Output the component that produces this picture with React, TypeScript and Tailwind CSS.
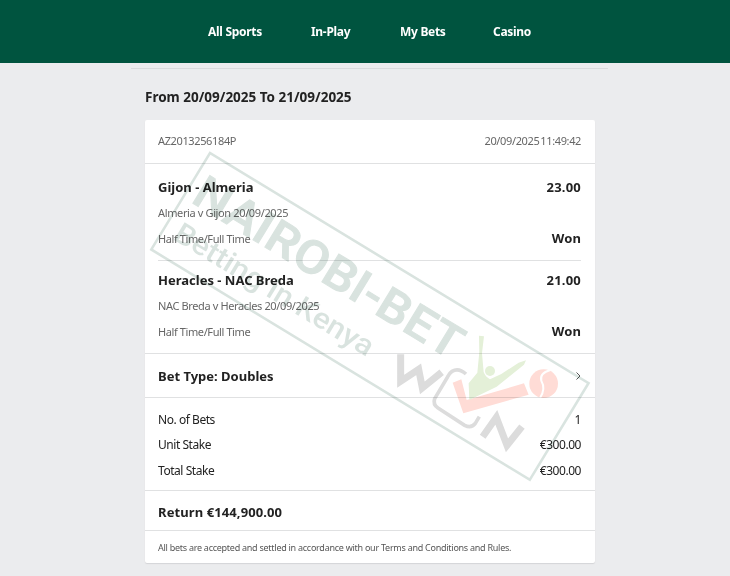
import React from 'react';

interface Selection {
  name: string;
  odds: string;
  fixture: string;
  market: string;
  result: string;
}

const navItems = [
  { label: 'All Sports', width: 'w-[55px]' },
  { label: 'In-Play', width: 'w-[41px]' },
  { label: 'My Bets', width: 'w-[45px]' },
  { label: 'Casino', width: 'w-[38px]' },
];

const selections: Selection[] = [
  {
    name: 'Gijon - Almeria',
    odds: '23.00',
    fixture: 'Almeria v Gijon 20/09/2025',
    market: 'Half Time/Full Time',
    result: 'Won',
  },
  {
    name: 'Heracles - NAC Breda',
    odds: '21.00',
    fixture: 'NAC Breda v Heracles 20/09/2025',
    market: 'Half Time/Full Time',
    result: 'Won',
  },
];

const stakes = [
  { label: 'No. of Bets', value: '1' },
  { label: 'Unit Stake', value: '€300.00' },
  { label: 'Total Stake', value: '€300.00' },
];

const Header: React.FC = () => (
  <header className="h-[63px] shrink-0 bg-[#00543f]">
    <nav className="flex h-full items-center gap-12 pl-52 pt-px text-[12px] font-bold tracking-[-0.3px] text-white">
      {navItems.map((item) => (
        <a key={item.label} href="#" className={`${item.width} whitespace-nowrap`}>
          {item.label}
        </a>
      ))}
    </nav>
  </header>
);

const SelectionRow: React.FC<{ selection: Selection }> = ({ selection }) => (
  <>
    <div className="flex h-6 items-center justify-between text-[13px] font-bold">
      <h3>{selection.name}</h3>
      <span className="tracking-[0.2px]">{selection.odds}</span>
    </div>
    <p className="flex h-[26px] items-center text-[11px] tracking-[-0.37px] text-[#666]">{selection.fixture}</p>
    <div className="flex h-[26px] items-center justify-between">
      <span className="text-[11px] tracking-[-0.4px] text-[#666]">{selection.market}</span>
      <span className="text-[13px] font-bold tracking-[0.1px]">{selection.result}</span>
    </div>
  </>
);

// Stamp that lies across the bet slip
const Watermark: React.FC = () => (
  <svg className="pointer-events-none absolute left-0 top-0 mix-blend-multiply" width="730" height="576" viewBox="0 0 730 576">
    <g transform="translate(210 153) rotate(31.3)" fill="#00482c" opacity="0.15">
      <rect x="0" y="0" width="443" height="113" fill="none" stroke="#00482c" strokeWidth="2.6" />
      <text x="8" y="52" className="font-[Roboto] text-[46px] font-medium" stroke="#00482c" strokeWidth="1" textLength="306" lengthAdjust="spacingAndGlyphs">
        NAIROBI-BET
      </text>
      <text x="12" y="93" className="font-[Roboto] text-[29px] font-medium" textLength="228" lengthAdjust="spacingAndGlyphs">
        Betting in Kenya
      </text>
    </g>
    <g transform="translate(370 320) scale(0.3333)">
      <g fill="none" stroke="#dcdcdc">
        <path d="M92 103 L92 184 L146 148 L157 204 L215 157" strokeWidth="21" />
        <path d="M288 162 Q266 142 246 154 Q238 159 232 172 L194 236 Q188 254 204 264 L284 316 Q304 326 316 310 L328 290" strokeWidth="11" />
        <path d="M338 350 L379 292 L411 376 L456 320" strokeWidth="21" />
      </g>
      <path d="M248 188 L274 178 L290 240 L462 190 L476 224 L280 280 Z" fill="#ffdcd6" />
      <g fill="#e4f0d8">
        <path d="M327 47 L342 49 L336 100 L341 156 Q346 170 360 178 L394 162 L446 128 L468 121 L462 134 L420 168 L380 200 L298 240 L296 190 L322 158 L328 96 Z" />
        <circle cx="360" cy="153" r="15" />
      </g>
      <circle cx="521" cy="191" r="43" fill="#ffdcd6" />
      <path d="M541 150 Q508 160 514 182 Q528 206 510 234" fill="none" stroke="#fff" strokeWidth="6" />
    </g>
  </svg>
);

export default function App() {
  return (
    <div className="relative flex h-[576px] w-[730px] flex-col overflow-hidden bg-[#ebecee] font-['Noto_Sans','Open_Sans',sans-serif] text-[#222]">
      <Header />
      <main className="flex flex-col">
        <div className="ml-[131px] mt-[5px] h-px w-[477px] bg-[#d9dadc]" />
        <h2 className="ml-[145px] flex h-[51px] items-center pt-1.5 text-[13.5px] font-bold">
          From 20/09/2025 To 21/09/2025
        </h2>
        <section className="ml-[145px] w-[450px] rounded-xs bg-white shadow-[0_1px_1px_#d4d5d7]">
          <div className="flex h-11 items-center justify-between border-b border-[#e0e1e2] pl-[13px] pr-3.5 text-[11px] tracking-[-0.37px] text-[#666]">
            <span>AZ2013256184P</span>
            <span className="[word-spacing:-1.5px]">20/09/2025 11:49:42</span>
          </div>
          <div className="border-b border-[#e0e1e2] pl-[13px] pr-3.5">
            {selections.map((selection, i) => (
              <div key={selection.name} className={i > 0 ? 'h-[93px] border-t border-[#e0e1e2] pt-2' : 'h-24 pt-3'}>
                <SelectionRow selection={selection} />
              </div>
            ))}
          </div>
          <div className="flex h-11 items-center justify-between border-b border-[#e0e1e2] pl-[13px] pr-3.5 pt-0.5 text-[13px] font-bold">
            <span>Bet Type: Doubles</span>
            <svg className="mb-0.5" width="5" height="8" viewBox="0 0 5 8" fill="none" stroke="#555">
              <path d="M0.5 0.5 L4 4 L0.5 7.5" />
            </svg>
          </div>
          <div className="flex h-[93px] flex-col border-b border-[#e0e1e2] pl-[13px] pr-3.5 pt-[9px] text-[12px] tracking-[-0.45px]">
            {stakes.map((row) => (
              <div key={row.label} className="flex h-[25.5px] items-center justify-between">
                <span>{row.label}</span>
                <span>{row.value}</span>
              </div>
            ))}
          </div>
          <div className="flex h-10 items-center border-b border-[#e0e1e2] px-[13px] pt-1 text-[13px] font-bold tracking-[0.1px]">
            Return €144,900.00
          </div>
          <p className="flex h-8 items-center px-[13px] pt-0.5 text-[9px] tracking-[-0.26px] text-[#555]">
            All bets are accepted and settled in accordance with our Terms and Conditions and Rules.
          </p>
        </section>
      </main>
      <Watermark />
    </div>
  );
}
